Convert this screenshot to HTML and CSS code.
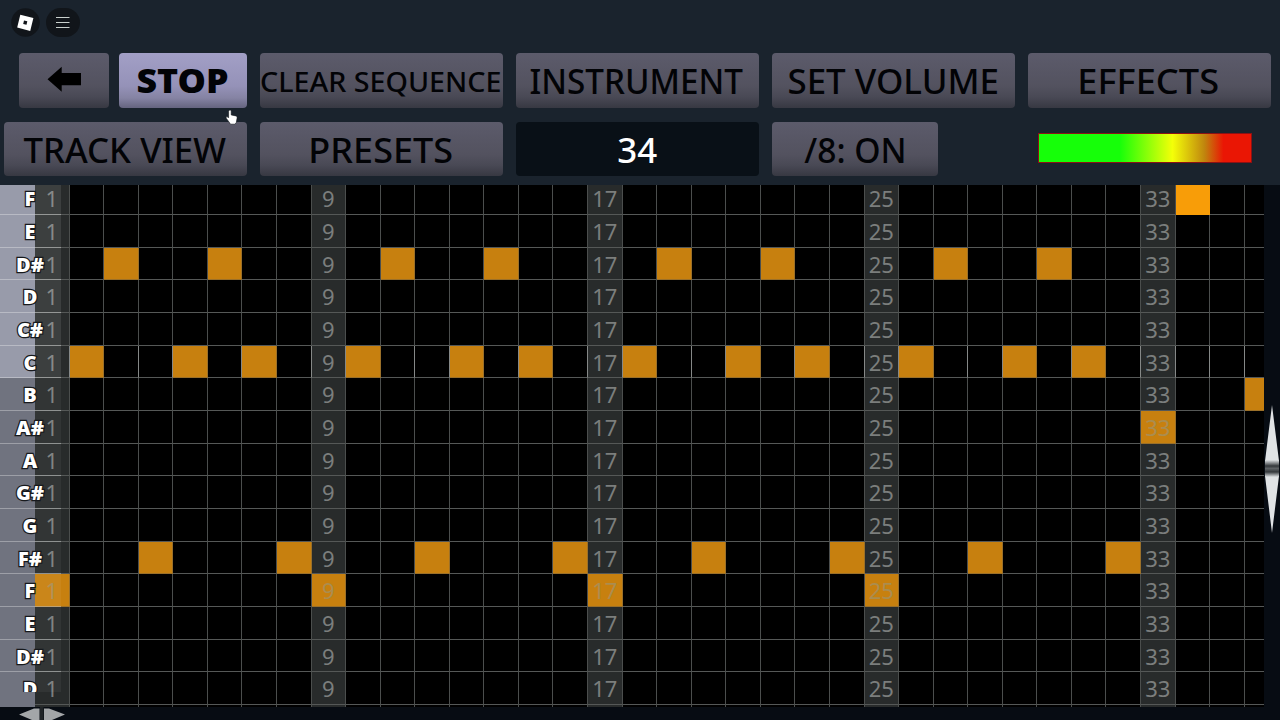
FILE: index.html
```html
<!DOCTYPE html>
<html lang="en">
<head>
<meta charset="utf-8">
<title>Sequencer</title>
<link rel="stylesheet" href="styles.css">
</head>
<body>
<div class="app">
  <header class="topbar">
    <svg class="round" width="29" height="29" viewBox="0 0 29 29"><circle cx="14.5" cy="14.5" r="14.3" fill="#11151a"/><path d="M9.300 6.800 22.400 9.900 19.200 22.900 6.200 19.600zM13 12.400 12.200 15.900 15.500 16.700 16.300 13.200z" fill="#fff" fill-rule="evenodd"/></svg>
    <svg class="round" width="34" height="29" viewBox="0 0 34 29"><rect width="34" height="29" rx="14.500" fill="#11151a"/><path d="M10 9.500h13.500M10 14.500h13.500M10 19.500h13.500" stroke="#c9d0cd" stroke-width="1.100"/></svg>
  </header>
  <nav class="bar first">
    <button class="btn back"><svg viewBox="0 0 90 55"><path d="M28.500 26.300 42.700 13.800v6.200h19.300v12.300H42.700v6.400z"/></svg></button>
    <button class="btn stop"><svg viewBox="0 0 128 55"><text class="heavy" x="17.500" y="40.200" textLength="92" lengthAdjust="spacingAndGlyphs">STOP</text></svg></button>
    <button class="btn wide"><svg viewBox="0 0 244 55"><text class="small" x="0" y="39" textLength="242" lengthAdjust="spacingAndGlyphs">CLEAR SEQUENCE</text></svg></button>
    <button class="btn wide"><svg viewBox="0 0 244 55"><text x="13.500" y="41" textLength="214" lengthAdjust="spacingAndGlyphs">INSTRUMENT</text></svg></button>
    <button class="btn wide"><svg viewBox="0 0 244 55"><text x="15.500" y="41" textLength="212" lengthAdjust="spacingAndGlyphs">SET VOLUME</text></svg></button>
    <button class="btn wide"><svg viewBox="0 0 244 55"><text x="49.500" y="41" textLength="142" lengthAdjust="spacingAndGlyphs">EFFECTS</text></svg></button>
  </nav>
  <nav class="bar second">
    <button class="btn wide"><svg viewBox="0 0 244 54"><text x="19.500" y="40.700" textLength="203" lengthAdjust="spacingAndGlyphs">TRACK VIEW</text></svg></button>
    <button class="btn wide"><svg viewBox="0 0 244 54"><text x="48.500" y="40.700" textLength="145" lengthAdjust="spacingAndGlyphs">PRESETS</text></svg></button>
    <div class="btn wide counter"><svg viewBox="0 0 244 54"><text x="101.500" y="40.700" textLength="40" lengthAdjust="spacingAndGlyphs">34</text></svg></div>
    <button class="btn eighth"><svg viewBox="0 0 167 54"><text x="32.500" y="40.700" textLength="103" lengthAdjust="spacingAndGlyphs">/8: ON</text></svg></button>
    <div class="meter"></div>
  </nav>
  <main class="roll"><div class="rows" id="rows"></div></main>
  <svg class="pointer" width="14" height="17" viewBox="0 0 14 17"><path d="M4.200 1.200c1.300-.5 2 .2 2 1.200v3.500l4.600 1c1.100.3 1.500 1 1.300 2.200l-.8 4.400-1.300 1.700H5.500L4 13 1.200 9.200c-.4-1.200.7-1.800 1.800-1l.6.600V2.300z" fill="#fff" stroke="#10151b" stroke-width=".6"/></svg>
  <svg class="hscroll" width="48" height="13" viewBox="0 0 48 13"><path d="M1 7.500 16 1.500h5.500V13H14zM26 1.500h5l16 6L34 13h-8z" fill="#a3a6a8"/><path d="M22 0h3.500v13H22z" fill="#202427"/></svg>
  <svg class="vscroll" width="16" height="130" viewBox="0 0 16 130"><defs><linearGradient id="mid" x2="0" y2="1"><stop offset="0" stop-color="#e0e3e5"/><stop offset=".35" stop-color="#33373a"/><stop offset=".5" stop-color="#5d6164"/><stop offset=".7" stop-color="#33373a"/><stop offset="1" stop-color="#e0e3e5"/></linearGradient></defs><path d="M8 1 15 57H1zM1 72h14L8 129z" fill="#e0e3e5"/><path d="M1 56h14v17H1z" fill="url(#mid)"/></svg>
</div>
<script src="roll.js"></script>
</body>
</html>
```

FILE: styles.css
```css
body { margin: 0; background: #060a11; }
.app { position: relative; width: 1280px; height: 720px; overflow: hidden; background: #070c13; font-family: "Noto Sans", sans-serif; }
.topbar { display: flex; gap: 6px; box-sizing: border-box; height: 53px; padding: 8px 0 0 11px; background: #1a232d; }
.bar { display: flex; background: #1a232d; }
.first { height: 69px; padding-left: 19px; }
.second { height: 63px; padding-left: 4px; gap: 12.500px; }
.btn { flex: none; box-sizing: border-box; height: 55px; margin: 0; padding: 0; border: 0; border-radius: 4px; overflow: hidden; background: linear-gradient(#5c5b6b, #53525f 60%, #494955 80%, #373842); }
.btn svg { display: block; width: 100%; height: 100%; }
.btn text { font: 500 34px "Noto Sans", sans-serif; fill: #020306; }
.btn .small { font-size: 27px; }
.btn .heavy { font-weight: 900; }
.wide { width: 243.400px; }
.first .wide { margin-left: 12.600px; }
.back { width: 90px; }
.stop { width: 128px; margin-left: 9.500px; background: linear-gradient(#a29fc6, #9592b8 60%, #8583a3 82%, #65647f); }
.first .stop + .wide { margin-left: 13.500px; }
.eighth { width: 166px; }
.second .btn { height: 54px; }
.counter { background: #091017; }
.counter text { fill: #fff; }
.meter { box-sizing: border-box; width: 214px; height: 30px; margin: 11px 0 0 88px; border: 1px solid #8c1114; background: linear-gradient(90deg, #16ff09 38%, #f4ff08 63%, #c0860e 78%, #ea1604 87%); background-clip: padding-box; }
.roll { width: 1264px; height: 522px; overflow: hidden; background: #000; }
.rows { width: 1284px; margin-top: -2.600px; }
.row { display: grid; grid-template: 32.680px / 35px repeat(36, 34.570px); height: 32.680px; }
.key { position: relative; z-index: 1; width: 61px; height: 32.680px; box-sizing: border-box; border-bottom: 1px solid #ffffff50; background: linear-gradient(90deg, #989baa 35px, #ffffff18 35px); text-align: center; font: 800 20px/34px "Open Sans", sans-serif; color: #fff; }
.low .key { background: linear-gradient(90deg, #70737f 35px, #ffffff0c 35px); }
.key span { display: block; width: 60px; height: 32px; -webkit-text-stroke: 2.500px #17191d; paint-order: stroke fill; }
.cell { box-sizing: border-box; border-right: 1px solid #4b4e4d; border-bottom: 1px solid #555857; text-align: center; font-size: 22px; line-height: 33px; color: #7b7e7d; }
.beat { background: #282b2b; }
.bright .cell { border-right-color: #858887; }
.cell.note { background: #c7800f; border-color: #9b7029; }
.beat.note { color: #aa8d50; }
.cell.playing { background: #f89d08; border-color: #f89d08; }
.last { background: linear-gradient(90deg, #70737f 35px, #000 35px); }
.rows .last .key { height: 20px; overflow: hidden; border-bottom: 0; }
.foot { display: grid; grid-template: 3px / 35px repeat(36, 34.570px); height: 3px; background: linear-gradient(90deg, #70737f 35px, #000 35px); }
.foot .cell { border-bottom: 0; }
.pointer { position: absolute; left: 225px; top: 109px; }
.hscroll { position: absolute; left: 18px; top: 707px; }
.vscroll { position: absolute; left: 1264px; top: 404px; }
```

FILE: roll.js
```js
const keys = ["F", "E", "D#", "D", "C#", "C", "B", "A#", "A", "G#", "G", "F#", "F", "E", "D#", "D"];
const notes = {
  0: [34],
  2: [3, 6, 11, 14, 19, 22, 27, 30],
  5: [2, 5, 7, 10, 13, 15, 18, 21, 23, 26, 29, 31],
  6: [36],
  7: [33],
  11: [4, 8, 12, 16, 20, 24, 28, 32],
  12: [1, 9, 17, 25]
};
const rows = document.getElementById("rows");

function addCells(row, index) {
  for (let step = 1; step <= 36; step++) {
    const cell = document.createElement("div");
    cell.className = "cell";
    if (step % 8 === 1) {
      cell.classList.add("beat");
      if (index !== null) cell.textContent = step;
    }
    if ((notes[index] || []).includes(step)) cell.classList.add("note");
    if (index === 0 && step === 34) cell.classList.add("playing");
    row.append(cell);
  }
}

keys.forEach((name, index) => {
  const row = document.createElement("div");
  row.className = "row";
  if (index > 5) row.classList.add("low");
  if (index === 5) row.classList.add("bright");
  if (index === keys.length - 1) row.classList.add("last");
  const key = document.createElement("div");
  key.className = "key";
  const label = document.createElement("span");
  label.textContent = name;
  key.append(label);
  row.append(key);
  addCells(row, index);
  rows.append(row);
});

const foot = document.createElement("div");
foot.className = "foot";
foot.append(document.createElement("div"));
addCells(foot, null);
rows.append(foot);
```
